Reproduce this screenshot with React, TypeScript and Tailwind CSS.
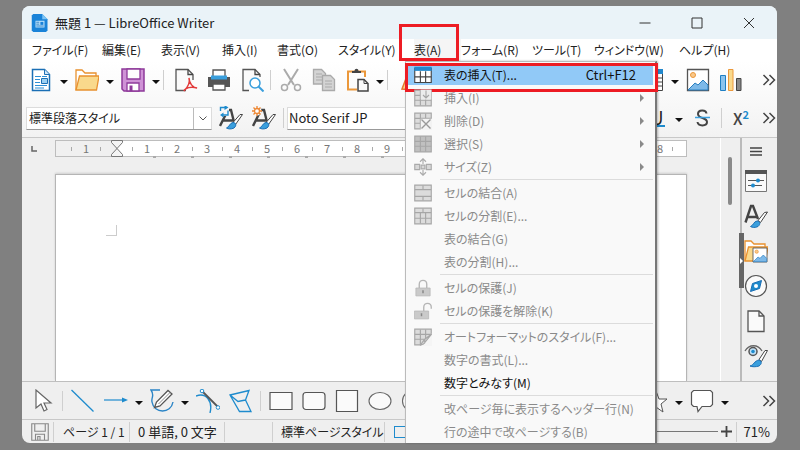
import React from "react";

type Kids = { children?: React.ReactNode };

const Svg = ({ children, size = "size-6" }: Kids & { size?: string }) => (
  <svg viewBox="0 0 24 24" fill="none" className={`block shrink-0 ${size}`} aria-hidden="true">
    {children}
  </svg>
);

const Tool = ({ label, children }: Kids & { label: string }) => (
  <button type="button" aria-label={label} className="flex size-6 shrink-0 items-center justify-center">
    {children}
  </button>
);

const Caret = ({ label }: { label: string }) => (
  <button type="button" aria-label={label} className="flex h-6 w-[22px] shrink-0 items-center justify-center pt-1">
    <svg viewBox="0 0 8 4" className="h-1 w-2" aria-hidden="true">
      <path d="M0 0h8L4 4z" fill="#111" />
    </svg>
  </button>
);

const Sep = ({ className = "" }: { className?: string }) => (
  <span className={`h-5 w-px shrink-0 bg-[#cfcfcf] ${className}`} />
);

const More = () => (
  <button type="button" aria-label="その他" className="flex h-6 w-4 items-center justify-center">
    <svg viewBox="0 0 14 12" fill="none" className="h-3 w-[14px]" aria-hidden="true">
      <path d="M1.500 1l5 5-5 5M7.500 1l5 5-5 5" stroke="#444" strokeWidth="1.500" />
    </svg>
  </button>
);

const BLUE = "#1e8bcd";

const NewDoc = () => (
  <Svg>
    <path d="M3.500 1.500h12l5 5v16h-17z" fill="#fff" stroke="#1b6fb5" strokeWidth="1.500" />
    <path d="M15.500 1.500v5h5" fill="#cfe6f7" stroke="#1b6fb5" />
    <path d="M6 8.500h6M6 11.500h5M6 14.500h5M6 17.500h12M6 20h9M13 8.500h5" stroke="#2d8fd5" />
    <path d="M12.500 10.500h6v5h-6z" fill="#9bd0f2" stroke="#1b6fb5" />
  </Svg>
);
const Folder = () => (
  <Svg>
    <path d="M1 22V2h6l3 3h11v4" fill="#fff" stroke="#e8912f" strokeWidth="1.300" />
    <path d="M1 22L4.500 8H24l-2.500 14z" fill="#f9d98c" stroke="#e8912f" strokeWidth="1.300" />
  </Svg>
);
const Save = () => (
  <Svg>
    <path d="M1 1h22v22H3l-2-2z" fill="#cf93d6" stroke="#8f3a9b" strokeWidth="1.500" />
    <path d="M6 1h13v10H6z" fill="#fdfdfd" stroke="#8f3a9b" strokeWidth="1.300" />
    <path d="M6 23v-8h12v8z" fill="#fff" stroke="#8f3a9b" strokeWidth="1.300" />
    <path d="M8.500 17.500h3V23h-3z" fill="#8f3a9b" />
  </Svg>
);
const Pdf = () => (
  <Svg>
    <path d="M12 22.500H2v-21h12l5 5V12" fill="#fafafa" stroke="#555" strokeWidth="1.300" />
    <path d="M14 1.500v5h5" stroke="#444" strokeWidth="1.300" />
    <path d="M15 10c1.500 5-1 9-5 13 1-3 7-5 13-3-4 0-8-5-8-10z" stroke="#e23b3b" strokeWidth="1.500" />
  </Svg>
);
const Print = () => (
  <Svg>
    <path d="M6 9V2h12v7" fill="#fff" stroke="#555" strokeWidth="1.300" />
    <path d="M1 9h22v10H1z" fill="#555" />
    <path d="M4 7.500h16v4H4z" fill="#3a9fdd" />
    <path d="M6 16h12v6H6z" fill="#fff" stroke="#555" strokeWidth="1.300" />
  </Svg>
);
const Preview = () => (
  <Svg>
    <path d="M9 22.500H3v-21h12l5 5V9" fill="#fafafa" stroke="#555" strokeWidth="1.300" />
    <path d="M15 1.500v5h5" stroke="#444" strokeWidth="1.300" />
    <circle cx="15" cy="15" r="5" fill="#fff" stroke="#3a9fdd" strokeWidth="1.500" />
    <path d="M18.500 18.500l5 5" stroke="#3a9fdd" strokeWidth="2" />
  </Svg>
);
const Cut = () => (
  <Svg>
    <path d="M5 1l10 16M19 1L9 17" stroke="#aaa" strokeWidth="2" />
    <circle cx="5.500" cy="19.500" r="3" stroke="#aaa" strokeWidth="1.500" />
    <circle cx="18.500" cy="19.500" r="3" stroke="#aaa" strokeWidth="1.500" />
  </Svg>
);
const Copy = () => (
  <Svg>
    <path d="M1.500 1.500h8l4 4V16h-12z" fill="#d4d4d4" stroke="#aaa" strokeWidth="1.300" />
    <path d="M4 6h6M4 9h6M4 12h6" stroke="#aaa" />
    <path d="M10.500 7.500h8l4 4v11h-12z" fill="#d4d4d4" stroke="#aaa" strokeWidth="1.300" />
    <path d="M13 13h7M13 16h7M13 19h7" stroke="#aaa" />
  </Svg>
);
const Paste = () => (
  <Svg>
    <path d="M12 21.500H3V3.500h17V9" stroke="#eb983b" strokeWidth="2" />
    <path d="M7 5V3h2.500c0-3 4-3 4 0H16v2z" fill="#444" />
    <path d="M13 11.500h6l4 4v7.500H13z" fill="#fafafa" stroke="#444" strokeWidth="1.500" />
    <path d="M19 11.500v4h4" stroke="#444" />
  </Svg>
);
const Picture = ({ size = "size-6" }: { size?: string }) => (
  <Svg size={size}>
    <path d="M1.500 1.500h21v21h-21z" fill="#fff" stroke="#555" strokeWidth="1.300" />
    <circle cx="7" cy="7" r="2.500" fill="#f9c98c" stroke="#eb983b" />
    <path d="M2 22l7-7 3 2 5-5 5 5v5z" fill="#7db9e8" stroke="#2a7fc0" />
  </Svg>
);
const Chart = () => (
  <Svg>
    <path d="M1.500 7.500h5v15h-5z" fill="#8cc4ee" stroke="#1e7fc4" />
    <path d="M9.500 1.500h4.500v21H9.500z" fill="#f9d98c" stroke="#eb983b" />
    <path d="M17.500 10.500h4.500v12h-4.500z" fill="#888" stroke="#444" />
  </Svg>
);
const LetterBrush = ({ extra }: { extra?: React.ReactNode }) => (
  <Svg>
    <path d="M1 20L9 4h3l3 12M4.500 14.500h9" stroke="#444" strokeWidth="2.400" />
    <path d="M23.500 8.500l-7 10-2.500-2 7-8z" fill="#fff" stroke="#444" />
    <path d="M14 16.500c3 0 4 3 1 5.500-3 1.500-6 1-7.500 0 3-1 3-5 6.500-5.500z" fill="#3a9fdd" stroke="#1b6fb5" />
    {extra}
  </Svg>
);
const Refresh = () => (
  <>
    <path d="M0 0h10v10H0z" fill="#f7f7f7" />
    <path d="M1.500 5V1.500H6M9 4.500V9H4" stroke={BLUE} strokeWidth="1.400" />
    <path d="M5.500-1l4 2.500-4 2.500zM4.500 6.500L1 9l3.500 2.500z" fill={BLUE} />
  </>
);
const Sun = () => (
  <>
    <circle cx="5" cy="5" r="4.500" fill="#f7f7f7" />
    <circle cx="5" cy="5" r="2.500" fill="#fff" stroke="#ed8733" strokeWidth="1.300" />
    <path d="M5 0v2M5 8v2M0 5h2M8 5h2M1.500 1.500L3 3M7 7l1.500 1.500M8.500 1.500L7 3M3 7L1.500 8.500" stroke="#ed8733" strokeWidth="1.300" />
  </>
);

/* Icons of the table menu */
const MENU_ICON = "size-[18px]";
const GridIcon = ({ kind }: { kind: string }) => {
  if (kind === "insert")
    return (
      <Svg size={MENU_ICON}>
        <path d="M1 3h22v19H1z" fill="#fff" stroke="#444" strokeWidth="1.500" />
        <path d="M.5 1h23v5.500H.5z" fill="#2388cc" />
        <path d="M1 14.500h22M8.500 7v15M15.500 7v15" stroke="#444" strokeWidth="1.500" />
      </Svg>
    );
  if (kind === "lock" || kind === "unlock")
    return (
      <Svg size={MENU_ICON}>
        <path d={kind === "lock" ? "M7 12V7c0-7 10-7 10 0v5" : "M13 12V7c0-7 10-7 10 0v2"} stroke="#b5b5b5" strokeWidth="1.800" />
        <path d={kind === "lock" ? "M2.500 12h19v10.500h-19z" : "M.5 12h19v10.500H.5z"} fill="#cacaca" stroke="#b5b5b5" />
        <path d={kind === "lock" ? "M11 15h2v4h-2z" : "M9 15h2v4H9z"} fill="#888" />
      </Svg>
    );
  if (kind === "size")
    return (
      <Svg size={MENU_ICON}>
        <path d="M1 8.500h6.500v7H1zM16.500 8.500H23v7h-6.500zM9.500 9.500h5v5h-5z" fill="#d8d8d8" stroke="#aaa" strokeWidth="1.500" />
        <path d="M12 1v7M8 5l4-4 4 4M12 16v7M8 19l4 4 4-4" stroke="#aaa" strokeWidth="1.500" />
      </Svg>
    );
  return (
    <Svg size={MENU_ICON}>
      <path d="M1 1.500h22v21H1z" fill={kind === "select" ? "#c0c0c0" : "#dcdcdc"} stroke="#a6a6a6" strokeWidth="1.500" />
      {kind === "merge" && <path d="M1 7.500h22M1 16.500h22M12 2v5.500M12 16.500V22" stroke="#a6a6a6" strokeWidth="1.500" />}
      {kind === "split" && <path d="M1 7.500h22M1 15h22M12 2v5.500M8.500 7.500V22M15.500 7.500V22" stroke="#a6a6a6" strokeWidth="1.500" />}
      {kind !== "merge" && kind !== "split" && (
        <path d="M1 8.500h22M1 15h22M8.500 2v20M15.500 2v20" stroke="#a6a6a6" strokeWidth="1.500" />
      )}
      {kind === "add" && (
        <>
          <path d="M9 1h14v13H9z" fill="#ececec" />
          <path d="M16 2v10M12 8l4 4 4-4" stroke="#a6a6a6" strokeWidth="1.500" />
        </>
      )}
      {kind === "delete" && (
        <>
          <path d="M9 9h15v15H9z" fill="#f3f3f3" />
          <path d="M10 10l12 12M22 10L10 22" stroke="#999" strokeWidth="1.800" />
        </>
      )}
      {kind === "style" && (
        <>
          <path d="M9 24L24 7v17z" fill="#f5f5f5" />
          <path d="M23.500 8l-8 10-2.500-2zM13 17c3 1 2 5-5 6 3-2 3-5 5-6z" fill="#d4d4d4" stroke="#a6a6a6" strokeWidth="1.500" />
        </>
      )}
    </Svg>
  );
};

type Entry = { text: string; key?: string; icon?: string; sub?: boolean; on?: boolean };
const groups: Entry[][] = [
  [
    { text: "表の挿入(T)...", key: "Ctrl+F12", icon: "insert", on: true },
    { text: "挿入(I)", icon: "add", sub: true },
    { text: "削除(D)", icon: "delete", sub: true },
    { text: "選択(S)", icon: "select", sub: true },
    { text: "サイズ(Z)", icon: "size", sub: true },
  ],
  [
    { text: "セルの結合(A)", icon: "merge" },
    { text: "セルの分割(E)...", icon: "split" },
    { text: "表の結合(G)" },
    { text: "表の分割(H)..." },
  ],
  [
    { text: "セルの保護(J)", icon: "lock" },
    { text: "セルの保護を解除(K)", icon: "unlock" },
  ],
  [
    { text: "オートフォーマットのスタイル(F)...", icon: "style" },
    { text: "数字の書式(L)..." },
    { text: "数字とみなす(M)", on: true },
  ],
  [{ text: "改ページ毎に表示するヘッダー行(N)" }, { text: "行の途中で改ページする(B)" }],
];

const TableMenu = () => (
  <div
    role="menu"
    className="absolute top-full -left-[9px] z-10 w-[252px] border border-b-0 border-[#bbb] border-r-2 border-r-[#777] bg-[#f9f9f9] pt-px shadow-[1px_0_2px_#0004]"
  >
    {groups.map((g, i) => (
      <div key={i}>
        {i > 0 && (
          <div className="flex h-[3px] items-center pr-[2px] pl-[34px]">
            <span className="h-px w-full bg-[#dcdcdc]" />
          </div>
        )}
        {g.map((e) => (
          <div key={e.text} className={`relative px-[2px] ${e.key ? "py-px" : ""}`}>
            <button
              type="button"
              role="menuitem"
              disabled={!e.on}
              className={`flex w-full items-center pl-[6px] text-left ${e.key ? "h-[21px] bg-[#91c9f7]" : "h-[23px]"} ${e.on ? "text-[#111]" : "text-[#8a8a8a]"}`}
            >
              <span className="mr-3 w-[18px] shrink-0">{e.icon && <GridIcon kind={e.icon} />}</span>
              <span className="whitespace-nowrap">{e.text}</span>
              {e.key && <span className="mr-[17px] ml-auto text-[13px]">{e.key}</span>}
              {e.sub && (
                <svg viewBox="0 0 4 8" className="mr-[9px] ml-auto h-2 w-1" aria-hidden="true">
                  <path d="M0 0l4 4-4 4z" fill="#8a8a8a" />
                </svg>
              )}
            </button>
            {e.key && <span className="pointer-events-none absolute top-0 -right-[3px] -bottom-[6px] -left-px border-3 border-[#ed1c24]" />}
          </div>
        ))}
      </div>
    ))}
  </div>
);

const menus = [
  ["ファイル(F)", "w-[70px]"],
  ["編集(E)", "w-[59px]"],
  ["表示(V)", "w-[61px]"],
  ["挿入(I)", "w-[55px]"],
  ["書式(O)", "w-[61px]"],
  ["スタイル(Y)", "w-[76px]"],
  ["表(A)", "w-[47px]"],
  ["フォーム(R)", "w-[71px]"],
  ["ツール(T)", "w-[62px]"],
  ["ウィンドウ(W)", "w-[85px]"],
  ["ヘルプ(H)", "w-[60px]"],
];

const Ruler = () => (
  <div className="relative mx-[33px] mt-[2px] h-[17px] text-[11px] text-[#777]">
    <div className="flex h-full overflow-hidden border border-[#bdbdbd] bg-white leading-[15px]">
      <div className="flex w-[61px] shrink-0 items-center justify-center border-r border-[#bdbdbd] bg-[#f0f0f0]">
        <span className="flex w-[30px] items-center justify-between">
          <i className="h-1 w-px bg-[#aaa]" />1<i className="h-1 w-px bg-[#aaa]" />
        </span>
      </div>
      <div className="flex pl-[15px]">
        {Array.from({ length: 18 }, (_, i) => (
          <span key={i} className="relative flex w-[30px] shrink-0 items-center justify-center">
            <i className="absolute left-0 h-1 w-px bg-[#aaa]" />
            {(i < 9 || i > 16) && i + 1}
          </span>
        ))}
        <i className="h-1 w-px self-center bg-[#aaa]" />
      </div>
    </div>
    <div className="absolute inset-x-0 -bottom-px flex overflow-hidden pl-[98px]">
      {Array.from({ length: 14 }, (_, i) => (
        <i key={i} className="mr-[35px] h-[2px] w-[3px] shrink-0 bg-[#aaa]" />
      ))}
    </div>
    <svg viewBox="0 0 12 17" fill="none" className="absolute top-0 left-[56px] h-[17px] w-3" aria-hidden="true">
      <path d="M.5.5h11v2L6 8.500.5 2.500zM.5 16.500h11v-2L6 8.500.5 14.500z" fill="#f4f4f4" stroke="#777" />
    </svg>
  </div>
);

const Page = () => (
  <Svg>
    <path d="M4 2h11l5 5v15.500H4z" fill="#fafafa" stroke="#555" strokeWidth="1.300" />
    <path d="M15 2v5h5" stroke="#555" strokeWidth="1.300" />
  </Svg>
);

export default function App() {
  return (
    <div className="flex min-h-screen flex-col bg-[#808080] pt-[6px] pr-[23px] pb-[7px] pl-[22px] font-['Noto_Sans_CJK_JP',sans-serif] text-[13px] leading-5 text-[#222] [font-feature-settings:'palt']">
      <div className="flex flex-1 flex-col rounded-lg bg-[#efefef]">
        <header className="flex h-[33px] items-center rounded-t-lg bg-[#eaf3f8] pl-[9px]">
          <Svg size="size-[18px]">
            <path d="M3 0h12l7 7v15l-2 2H3l-2-2V2z" fill="#1a83d8" />
            <path d="M15 0v7h7z" fill="#7cc4f5" />
            <path d="M6 9h12v9H6z" fill="#b8e0fb" />
            <path d="M7 11h4M7 13.500h4M7 16h10" stroke="#1a6fb8" />
            <path d="M12.500 10.500h4v4h-4z" fill="#1a83d8" />
          </Svg>
          <h1 className="ml-[6px] whitespace-nowrap">無題 1 — LibreOffice Writer</h1>
          <div className="mr-[22px] ml-auto flex gap-[40px]">
            {[
              ["最小化", "M.5 6h11"],
              ["最大化", "M1 1h10v10H1z"],
              ["閉じる", "M1 1l10 10M11 1L1 11"],
            ].map(([l, d]) => (
              <button key={l} type="button" aria-label={l}>
                <svg viewBox="0 0 12 12" fill="none" className="size-3" aria-hidden="true">
                  <path d={d} stroke="#333" />
                </svg>
              </button>
            ))}
          </div>
        </header>

        <nav className="flex h-[22px] bg-white pl-[10px] text-xs leading-5">
          {menus.map(([m, w]) =>
            m === "表(A)" ? (
              <div key={m} className={`relative shrink-0 ${w}`}>
                <button type="button" aria-expanded="true" className="h-full w-full bg-[#f5f5f5] text-left">
                  {m}
                </button>
                <TableMenu />
                <span className="pointer-events-none absolute -top-[15px] -left-[15px] z-20 h-[37px] w-[60px] border-3 border-[#ed1c24]" />
              </div>
            ) : (
              <button key={m} type="button" className={`shrink-0 text-left whitespace-nowrap ${w}`}>
                {m}
              </button>
            ),
          )}
        </nav>

        <div className="flex h-[38px] items-center bg-gradient-to-b from-white to-[#f9f9f9] pl-[7px]">
          <Tool label="新規"><NewDoc /></Tool>
          <Caret label="新規の種類" />
          <Tool label="開く"><Folder /></Tool>
          <Caret label="最近のファイル" />
          <Tool label="保存"><Save /></Tool>
          <Caret label="保存の種類" />
          <Sep className="-ml-1 mr-[10px]" />
          <div className="flex gap-[9px]">
            <Tool label="PDF"><Pdf /></Tool>
            <Tool label="印刷"><Print /></Tool>
            <Tool label="印刷プレビュー"><Preview /></Tool>
          </div>
          <Sep className="ml-[6px] mr-2" />
          <div className="flex gap-[9px]">
            <Tool label="切り取り"><Cut /></Tool>
            <Tool label="コピー"><Copy /></Tool>
            <Tool label="貼り付け"><Paste /></Tool>
          </div>
          <Caret label="貼り付けの種類" />
          <Sep className="-ml-1 mr-[10px]" />
          <Tool label="書式のコピー">
            <Svg>
              <path d="M4 21L9 8l9 3-3 11z" fill="#f9d98c" stroke="#e8772f" strokeWidth="1.500" />
            </Svg>
          </Tool>
          <div className="ml-auto flex items-center">
            <Tool label="表">
              <Svg>
                <path d="M1.500 2.500h21v20h-21z" fill="#fff" stroke="#444" />
                <path d="M1 1h22v5H1z" fill="#2388cc" />
                <path d="M2 10h20M2 14h20M2 18h20M8 6v16M16 6v16" stroke="#444" />
              </Svg>
            </Tool>
            <Caret label="表の大きさ" />
            <div className="flex gap-[9px]">
              <Tool label="画像"><Picture /></Tool>
              <Tool label="グラフ"><Chart /></Tool>
            </div>
            <span className="ml-[18px]"><More /></span>
          </div>
        </div>

        <div className="flex h-[39px] items-center border-b border-[#c8c8c8] bg-gradient-to-b from-[#f9f9f9] to-[#f2f2f2] pl-1">
          <label className="relative flex h-[23px] w-[186px] shrink-0 border border-[#dcdcdc] border-b-[#999] bg-white">
            <select aria-label="段落スタイル" className="w-full appearance-none pl-[2px] text-xs outline-none">
              <option>標準段落スタイル</option>
            </select>
            <span className="pointer-events-none absolute inset-y-0 right-0 flex w-[18px] items-center justify-center border-l border-[#bbb]">
              <svg viewBox="0 0 8 5" fill="none" className="h-[5px] w-2" aria-hidden="true">
                <path d="M.5.5L4 4 7.500.5" stroke="#555" />
              </svg>
            </span>
          </label>
          <div className="ml-[7px] flex gap-[9px]">
            <Tool label="スタイルの更新"><LetterBrush extra={<Refresh />} /></Tool>
            <Tool label="新規スタイル"><LetterBrush extra={<Sun />} /></Tool>
          </div>
          <Sep className="ml-[7px] mr-[3px]" />
          <select aria-label="フォント名" className="h-[23px] w-[186px] appearance-none border border-[#dcdcdc] border-b-[#999] bg-white pl-px outline-none">
            <option>Noto Serif JP</option>
          </select>
          <div className="ml-auto flex items-center">
            <button type="button" aria-label="下線" className="w-4 text-lg leading-4">
              <span className="block border-b-2 border-[#1e8bcd]">U</span>
            </button>
            <span className="ml-[3px]"><Caret label="下線の種類" /></span>
            <Tool label="取り消し線">
              <Svg>
                <path d="M16.500 7.500c-.5-4-8.500-4-8.500.5 0 5 9 3 9 8 0 4.500-9 4.500-9.500 0" stroke="#444" strokeWidth="2" />
                <path d="M5 11.500h15" stroke="#3a9fdd" strokeWidth="1.500" />
              </Svg>
            </Tool>
            <Sep className="mx-[7px]" />
            <Tool label="上付き">
              <span className="text-base leading-4 font-medium text-[#444]">X</span>
              <span className="mb-2 text-[11px] leading-3 font-bold text-[#1e8bcd]">2</span>
            </Tool>
            <span className="ml-2"><More /></span>
          </div>
        </div>

        <main className="flex flex-1">
          <div className="relative flex min-w-0 flex-1 flex-col">
            <svg viewBox="0 0 6 6" fill="none" className="absolute top-2 left-[9px] size-[6px]" aria-hidden="true">
              <path d="M1 0v5h5" stroke="#666" strokeWidth="1.500" />
            </svg>
            <Ruler />
            <div className="mx-[33px] mt-[17px] flex-1 border border-b-0 border-[#b5b5b5] bg-white pt-[50px] pl-[50px] shadow-[0_-1px_2px_#0002]">
              <div className="size-[11px] border-r border-b border-[#ccc]" />
            </div>
          </div>
          <div className="w-5 border-l border-white pt-[19px] pl-[7px]">
            <div className="h-12 w-1 rounded-full bg-[#8a8a8a]" />
          </div>
          <aside className="relative flex w-[37px] flex-col items-center border-l-2 border-[#bababa] pr-[9px] pl-[2px]">
            <span className="absolute top-[95px] -left-[3px] flex h-[55px] w-[5px] items-center bg-[#666]">
              <svg viewBox="0 0 4 6" className="h-[6px] w-1" aria-hidden="true">
                <path d="M1 0l3 3-3 3z" fill="#fff" />
              </svg>
            </span>
            <button type="button" aria-label="サイドバーの設定" className="flex h-[26px] shrink-0 items-center">
              <svg viewBox="0 0 12 9" className="h-[9px] w-3" aria-hidden="true">
                <path d="M0 1h12M0 4.500h12M0 8h12" stroke="#444" strokeWidth="1.300" />
              </svg>
            </button>
            <div className="flex flex-col gap-[11px] pt-[5px]">
              <Tool label="プロパティ">
                <Svg>
                  <path d="M1.500 1.500h21v21h-21z" fill="#fafafa" stroke="#777" />
                  <path d="M1 1h22v4H1z" fill="#555" />
                  <path d="M4 11.500h16M4 16.500h14" stroke="#555" />
                  <circle cx="14" cy="11.500" r="2" fill={BLUE} />
                  <circle cx="9" cy="16.500" r="2" fill={BLUE} />
                </Svg>
              </Tool>
              <Tool label="スタイル">
                <Svg>
                  <path d="M1.500 18.500L7 2h2l5 13M4 13h8.500" stroke="#444" strokeWidth="2.400" />
                  <path d="M23.500 8l-7 10.500-2.500-2 6.500-8z" fill="#fff" stroke="#444" />
                  <path d="M13 17c3 0 4 3 1 5.500-3 1.500-6 1-7.500 0 3-1 3-5 6.500-5.500z" fill="#3a9fdd" stroke="#1b6fb5" />
                </Svg>
              </Tool>
              <Tool label="ギャラリー">
                <span className="relative">
                  <Folder />
                  <span className="absolute right-0 bottom-0"><Picture size="size-4" /></span>
                </span>
              </Tool>
              <Tool label="ナビゲーター">
                <Svg>
                  <circle cx="12" cy="12" r="10.500" fill="#fafafa" stroke="#555" strokeWidth="1.200" />
                  <path d="M17.500 6.500l-2 8-9 3 2-8z" fill={BLUE} stroke="#1b6fb5" />
                  <circle cx="12" cy="12" r="2" fill="#fff" />
                </Svg>
              </Tool>
              <Tool label="ページ"><Page /></Tool>
              <Tool label="スタイルインスペクター">
                <Svg>
                  <path d="M1 7c4-7 13-7 17 0" stroke="#666" strokeWidth="1.300" />
                  <circle cx="9" cy="7.500" r="4" fill="#bfe0f7" stroke="#555" strokeWidth="1.500" />
                  <circle cx="9" cy="7.500" r="1.800" fill={BLUE} />
                  <path d="M23.500 6.500l-6 11-2.500-2 6-9z" fill="#fff" stroke="#444" />
                  <path d="M15 16c3 1 3 4 0 6-3 1-7 1-9 0 4-1 4-5 9-6z" fill="#3a9fdd" stroke="#1b6fb5" />
                </Svg>
              </Tool>
            </div>
          </aside>
        </main>

        <div className="flex h-[38px] items-center border-t border-[#c0c0c0] pl-2">
          <Tool label="選択">
            <Svg>
              <path d="M6 1v18l5-4 3 7 3-1.500-3-6.500h7z" fill="#fff" stroke="#666" strokeWidth="1.200" />
            </Svg>
          </Tool>
          <Sep className="mx-2" />
          <div className="flex gap-[9px]">
            <Tool label="線"><Svg><path d="M.5 1l22 21.500" stroke={BLUE} strokeWidth="1.300" /></Svg></Tool>
            <Tool label="矢印"><Svg><path d="M0 11h18" stroke={BLUE} strokeWidth="1.200" /><path d="M18 8.500l6 2.500-6 2.500z" fill={BLUE} /></Svg></Tool>
          </div>
          <Caret label="矢印の種類" />
          <Tool label="フリーハンド">
            <Svg>
              <path d="M10 1H1c4 6 0 7 1 12 2 12 19 12 21 0" stroke="#2a84c6" strokeWidth="1.400" />
              <path d="M4.500 18.500L6.500 13 18 1.500l4 3.500-12 12z" fill="#fff" stroke="#555" strokeWidth="1.300" />
              <path d="M8.500 15L20 3.500" stroke="#888" />
            </Svg>
          </Tool>
          <Caret label="曲線の種類" />
          <div className="flex gap-[9px]">
            <Tool label="曲線">
              <Svg>
                <path d="M0 7c10-4 17 5 14 17" stroke={BLUE} strokeWidth="1.400" />
                <path d="M6 2l16 16" stroke="#555" strokeWidth="1.800" />
                <circle cx="6" cy="2" r="1.800" fill="#fff" stroke={BLUE} />
                <circle cx="22" cy="18.500" r="1.800" fill="#fff" stroke={BLUE} />
              </Svg>
            </Tool>
            <Tool label="多角形">
              <Svg><path d="M1 6l19-4.500-3.500 9.500 5.500 11.500H10.500zM1 6l8 6.500 7.500-1.500" stroke={BLUE} strokeWidth="1.300" /></Svg>
            </Tool>
          </div>
          <Sep className="ml-[7px] mr-2" />
          <div className="flex gap-[9px]">
            <Tool label="四角形"><Svg><path d="M1 3.500h22v17H1z" fill="#fafafa" stroke="#555" strokeWidth="1.200" /></Svg></Tool>
            <Tool label="角丸四角形"><Svg><rect x="1" y="3.500" width="22" height="17" rx="3" fill="#fafafa" stroke="#555" strokeWidth="1.200" /></Svg></Tool>
            <Tool label="正方形"><Svg><path d="M1.500 1.500h21v21h-21z" fill="#fafafa" stroke="#555" strokeWidth="1.200" /></Svg></Tool>
            <Tool label="楕円"><Svg><ellipse cx="12" cy="12" rx="11" ry="8.500" fill="#fafafa" stroke="#666" strokeWidth="1.100" /></Svg></Tool>
            <Tool label="円"><Svg><circle cx="12" cy="12" r="10.500" fill="#fafafa" stroke="#666" strokeWidth="1.100" /></Svg></Tool>
          </div>
          <div className="ml-auto flex items-center">
            <Tool label="星"><Svg><path d="M12 2l3 8h8l-6 5 2 8-7-5-7 5 2-8-6-5h8z" fill="#fff" stroke="#555" /></Svg></Tool>
            <Caret label="星の種類" />
            <Tool label="吹き出し">
              <Svg><path d="M3.500 1.500h17l2 2v12l-2 2H12l-4 5-1-5H3.500l-2-2v-12z" fill="#fff" stroke="#555" strokeWidth="1.200" /></Svg>
            </Tool>
            <Caret label="吹き出しの種類" />
            <span className="ml-[25px]"><More /></span>
          </div>
        </div>

        <footer className="flex h-6 items-center border-t border-[#c8c8c8] pl-[9px] whitespace-nowrap">
          <Svg size="size-[18px]">
            <path d="M1 1h22v22H1zM5 1v10h14V1M6 23v-8h12v8M9 23v-5h3v5" stroke="#888" strokeWidth="1.500" />
          </Svg>
          <Sep className="ml-1 mr-[9px]" />
          <span className="w-[66px] text-xs">ページ 1 / 1</span>
          <Sep className="mr-2" />
          <span className="w-[86px]">0 単語, 0 文字</span>
          <Sep className="mr-[47px]" />
          <Sep className="mr-2" />
          <span className="w-[103px] text-xs">標準ページスタイル</span>
          <Sep className="mr-[9px]" />
          <span className="h-3 w-6 border border-[#1e8bcd]" />
          <div className="mr-[7px] ml-auto flex items-center">
            <div className="flex w-20 items-center">
              <i className="h-px flex-1 bg-[#777]" />
              <i className="h-[5px] w-px bg-[#777]" />
              <i className="h-px w-[61px] bg-[#777]" />
            </div>
            <button type="button" aria-label="拡大" className="ml-[3px]">
              <svg viewBox="0 0 11 11" className="size-[11px]" aria-hidden="true">
                <path d="M5.500 0v11M0 5.500h11" stroke="#444" strokeWidth="1.800" />
              </svg>
            </button>
            <Sep className="ml-1 mr-[7px]" />
            <span>71%</span>
          </div>
        </footer>
      </div>
    </div>
  );
}
